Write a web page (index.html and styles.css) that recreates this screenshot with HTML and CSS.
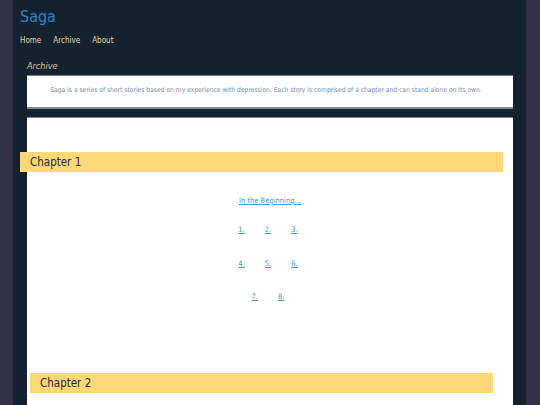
FILE: index.html
```html
<!DOCTYPE html>
<html>
<head>
<meta charset="utf-8">
<link rel="stylesheet" href="styles.css">
</head>
<body>
<div class="page">
  <header class="header">
    <h1 class="title">Saga</h1>
    <nav class="nav">
      <a class="nav-link" href="#">Home</a>
      <a class="nav-link" href="#">Archive</a>
      <a class="nav-link" href="#">About</a>
    </nav>
  </header>
  <main class="content">
    <h2 class="section-label">Archive</h2>
    <div class="intro">Saga is a series of short stories based on my experience with depression. Each story is comprised of a chapter and can stand alone on its own.</div>
    <div class="archive">
      <section class="chapter chapter-one">
        <h3 class="chapter-title">Chapter 1</h3>
        <div class="links">
          <div class="row row-first"><a class="story" href="#">In the Beginning...</a></div>
          <div class="row row-a"><a class="story num" href="#">1.</a><a class="story num" href="#">2.</a><a class="story num" href="#">3.</a></div>
          <div class="row row-b"><a class="story num" href="#">4.</a><a class="story num" href="#">5.</a><a class="story num" href="#">6.</a></div>
          <div class="row row-c"><a class="story num" href="#">7.</a><a class="story num" href="#">8.</a></div>
        </div>
      </section>
      <section class="chapter chapter-two">
        <h3 class="chapter-title">Chapter 2</h3>
      </section>
    </div>
  </main>
</div>
</body>
</html>
```
FILE: styles.css
```css
html, body {
  margin: 0;
  padding: 0;
  height: 100%;
}
body {
  background: #332f48;
  font-family: "DejaVu Sans Condensed", "DejaVu Sans", sans-serif;
  overflow: hidden;
}
.page {
  margin: 0 14px 0 13px;
  background: #14222f;
  min-height: 405px;
}
.header {
  padding: 8px 0 0 7px;
}
.title {
  margin: 0;
  font-size: 16px;
  line-height: 18px;
  font-weight: normal;
  color: #2e83c6;
}
.nav {
  display: flex;
  gap: 12px;
  margin-top: 10px;
}
.nav-link {
  font-size: 8px;
  line-height: 10px;
  color: #e3d6a4;
  text-decoration: none;
}
.content {
  padding: 0 13px 0 14px;
}
.section-label {
  margin: 15px 0 0 0;
  font-size: 9px;
  line-height: 11px;
  font-style: italic;
  font-weight: normal;
  color: #d9c98f;
}
.intro {
  margin-top: 3px;
  background: #fff;
  border-top: 1px solid #6f7f8e;
  border-bottom: 2px solid #7d8a96;
  box-sizing: border-box;
  height: 34px;
  padding: 9px 8px 0 0;
  text-align: center;
  font-size: 6.7px;
  line-height: 10px;
  color: #6f8daa;
}
.archive {
  margin-top: 8px;
  background: #fff;
  border-top: 1px solid #7d8a96;
  min-height: 300px;
  padding-top: 34px;
}
.chapter-title {
  margin: 0;
  height: 20px;
  background: #fdd778;
  font-size: 11.5px;
  line-height: 20px;
  font-weight: normal;
  color: #2a2a2a;
  box-sizing: border-box;
}
.chapter-one .chapter-title {
  margin: 0 10px 0 -7px;
  padding-left: 10px;
}
.chapter-two .chapter-title {
  margin: 0 20px 0 3px;
  padding-left: 10px;
}
.links {
  padding-top: 24px;
  height: 201px;
  box-sizing: border-box;
}
.row {
  text-align: center;
  font-size: 7.5px;
  line-height: 10px;
}
.row-a { margin-top: 19px; }
.row-b { margin-top: 24px; }
.row-c { margin-top: 23px; }
.story {
  color: #3c97d2;
  text-decoration: underline;
}
.num {
  display: inline-block;
  margin: 0 10px;
}
.row-a, .row-b, .row-c {
  padding-right: 4px;
}
```
